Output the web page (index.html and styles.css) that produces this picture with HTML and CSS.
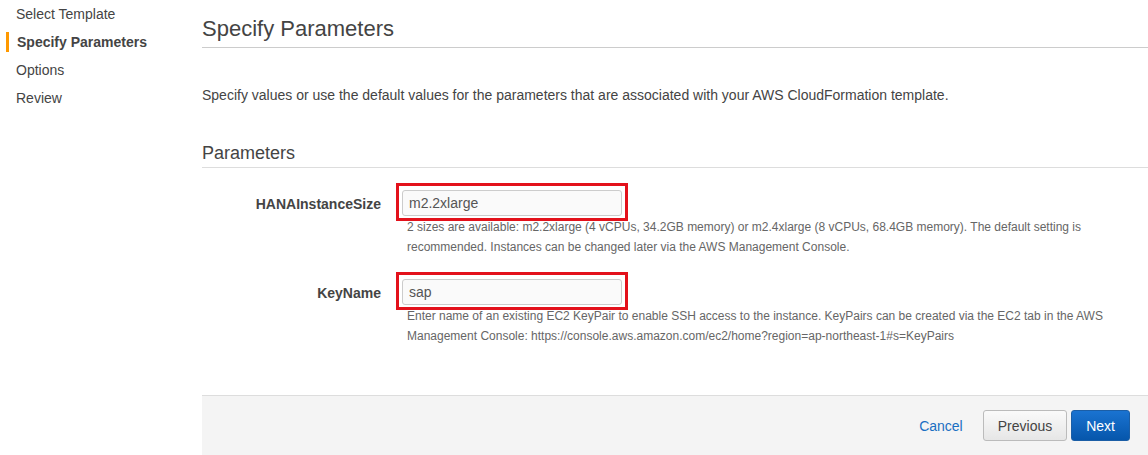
FILE: index.html
```html
<!DOCTYPE html>
<html lang="en">

<head>
    <meta charset="UTF-8">
    <meta name="viewport" content="width=device-width, initial-scale=1.0">
    <title>Specify Parameters</title>
    <link rel="stylesheet" href="styles.css">
</head>

<body>

    <div class="wizard">
        <ul class="steps">
            <li>Select Template</li>
            <li class="current">Specify Parameters</li>
            <li>Options</li>
            <li>Review</li>
        </ul>

        <div class="content">
            <h2 class="pageTitle">Specify Parameters</h2>

            <p class="intro">Specify values or use the default values for the parameters that are associated with your AWS CloudFormation template.</p>

            <h3 class="sectionTitle">Parameters</h3>

            <div class="param">
                <label for="hanaSize">HANAInstanceSize</label>
                <div class="field">
                    <div class="marked">
                        <input type="text" id="hanaSize" value="m2.2xlarge">
                    </div>
                    <p class="help">2 sizes are available: m2.2xlarge (4 vCPUs, 34.2GB memory) or m2.4xlarge (8 vCPUs, 68.4GB memory). The default setting is recommended. Instances can be changed later via the AWS Management Console.</p>
                </div>
            </div>

            <div class="param">
                <label for="keyName">KeyName</label>
                <div class="field">
                    <div class="marked">
                        <input type="text" id="keyName" value="sap">
                    </div>
                    <p class="help">Enter name of an existing EC2 KeyPair to enable SSH access to the instance. KeyPairs can be created via the EC2 tab in the AWS Management Console: https://console.aws.amazon.com/ec2/home?region=ap-northeast-1#s=KeyPairs</p>
                </div>
            </div>

            <div class="footer">
                <a href="#" class="cancel">Cancel</a>
                <button type="button" class="btn">Previous</button>
                <button type="button" class="btn primary">Next</button>
            </div>
        </div>
    </div>

</body>

</html>
```

FILE: styles.css
```css
body {
    margin: 0;
    font-family: "Liberation Sans", Arial, sans-serif;
    color: #444;
    background-color: #fff;
}

.wizard {
    display: grid;
    grid-template-columns: 202px 1fr;
    height: 455px;
}

.steps {
    list-style: none;
    margin: 0;
    padding: 0;
}

.steps li {
    font-size: 14px;
    line-height: 28px;
    padding-left: 16px;
    position: relative;
}

.steps li.current {
    font-weight: bold;
    padding-left: 17px;
}

.steps li.current::before {
    content: "";
    position: absolute;
    left: 6px;
    top: 4px;
    width: 3px;
    height: 20px;
    background-color: #f90;
}

.content {
    display: flex;
    flex-direction: column;
}

.pageTitle {
    margin: 0;
    padding: 16px 0 5px;
    font-size: 22px;
    font-weight: normal;
    line-height: 26px;
    border-bottom: 1px solid #ccc;
}

.intro {
    margin: 37px 0 0;
    font-size: 14px;
    line-height: 20px;
}

.sectionTitle {
    margin: 36px 0 0;
    padding-bottom: 2px;
    font-size: 18px;
    font-weight: normal;
    line-height: 24px;
    border-bottom: 1px solid #ddd;
}

.param {
    display: grid;
    grid-template-columns: 179px 1fr;
    column-gap: 21px;
    margin-top: 22px;
}

.param label {
    text-align: right;
    font-size: 14px;
    font-weight: bold;
    line-height: 26px;
    padding-top: 1px;
    color: #444;
}

.field {
    padding-right: 30px;
}

.marked {
    position: relative;
    width: 220px;
}

.marked::after {
    content: "";
    position: absolute;
    left: -6px;
    right: -6px;
    top: -7px;
    bottom: -5px;
    border: 3px solid #e3111b;
    pointer-events: none;
}

.marked input {
    display: block;
    width: 100%;
    height: 26px;
    box-sizing: border-box;
    padding: 0 6px;
    border: 1px solid #ccc;
    border-radius: 3px;
    background-color: #fafafa;
    font-family: inherit;
    font-size: 14px;
    color: #555;
}

.help {
    margin: 1px 0 0;
    padding-left: 5px;
    font-size: 12px;
    line-height: 20px;
    color: #666;
}

.footer {
    margin-top: auto;
    height: 59px;
    border-top: 1px solid #ddd;
    background-color: #f4f4f4;
    display: flex;
    align-items: center;
    justify-content: flex-end;
    gap: 4px;
    padding-right: 18px;
}

.cancel {
    font-size: 14px;
    color: #1a6fc2;
    text-decoration: none;
    margin-right: 16px;
}

.btn {
    height: 31px;
    padding: 0 14px;
    font-family: inherit;
    font-size: 14px;
    color: #444;
    border: 1px solid #bbb;
    border-radius: 3px;
    background: linear-gradient(#fafafa, #e6e6e6);
    cursor: pointer;
}

.btn.primary {
    color: #fff;
    border-color: #1b5ea6;
    background: linear-gradient(#1a73d1, #0656ab);
}
```
